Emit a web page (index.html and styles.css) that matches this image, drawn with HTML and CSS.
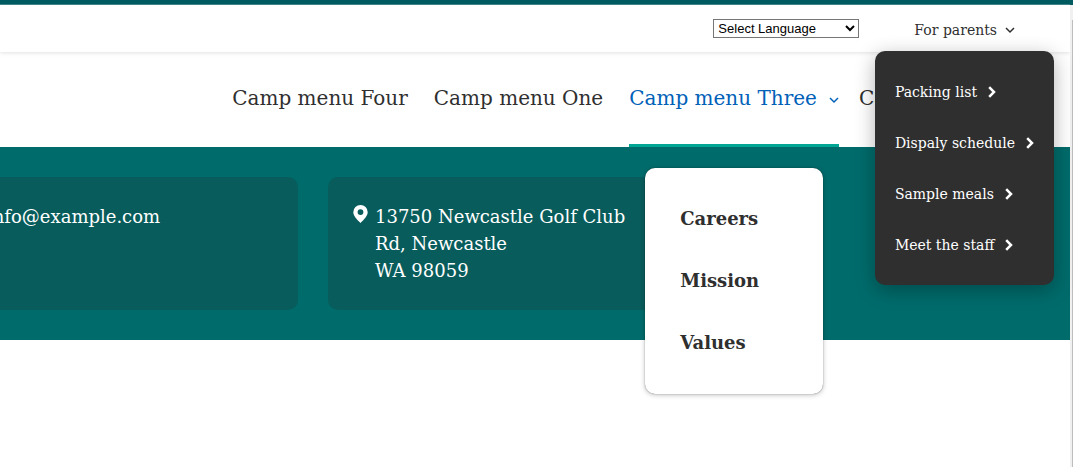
FILE: index.html
```html
<!DOCTYPE html>
<html lang="en">
<head>
<meta charset="utf-8">
<title>Camp</title>
<link rel="stylesheet" href="styles.css">
</head>
<body>
<div class="viewport">
  <div class="page">
    <header>
      <div class="topbar">
        <select class="language" aria-label="Select Language"><option>Select Language</option></select>
        <div class="parents">
          <a class="parents-link" href="#">For parents
            <svg class="chevron" viewBox="0 0 10 10" aria-hidden="true"><path d="M1 3l4 4 4-4"/></svg></a>
          <nav class="parents-menu" aria-label="For parents">
            <a href="#">Packing list <svg class="arrow" viewBox="0 0 8 12" aria-hidden="true"><path d="M1.200 1.200L6 6l-4.800 4.800"/></svg></a>
            <a href="#">Dispaly schedule <svg class="arrow" viewBox="0 0 8 12" aria-hidden="true"><path d="M1.200 1.200L6 6l-4.800 4.800"/></svg></a>
            <a href="#">Sample meals <svg class="arrow" viewBox="0 0 8 12" aria-hidden="true"><path d="M1.200 1.200L6 6l-4.800 4.800"/></svg></a>
            <a href="#">Meet the staff <svg class="arrow" viewBox="0 0 8 12" aria-hidden="true"><path d="M1.200 1.200L6 6l-4.800 4.800"/></svg></a>
          </nav>
        </div>
      </div>
      <nav class="mainnav" aria-label="Main">
        <a class="nav-link" href="#">Camp menu Four</a>
        <a class="nav-link" href="#">Camp menu One</a>
        <div class="nav-group">
          <a class="nav-link active" href="#">Camp menu Three
            <svg class="chevron" viewBox="0 0 10 10" aria-hidden="true"><path d="M1 3l4 4 4-4"/></svg></a>
          <div class="submenu">
            <a href="#">Careers</a>
            <a href="#">Mission</a>
            <a href="#">Values</a>
          </div>
        </div>
        <a class="nav-link" href="#">Camp menu Two</a>
      </nav>
    </header>
    <main class="contact">
      <div class="cards">
        <section class="card">
          <svg class="icon" viewBox="0 0 15 18" aria-hidden="true"><path d="M0 3h15v12H0z"/></svg>
          <a href="#">info@example.com</a>
        </section>
        <section class="card">
          <svg class="icon" viewBox="0 0 15 18" aria-hidden="true"><path fill-rule="evenodd" d="M7.500 0A7.200 7.200 0 0 0 .3 7.200C.3 10.500 3.500 14 7.500 18 11.500 14 14.700 10.500 14.700 7.200A7.200 7.200 0 0 0 7.500 0zM7.500 4.200a2.900 2.900 0 1 1 0 5.800 2.900 2.900 0 0 1 0-5.800z"/></svg>
          <address>13750 Newcastle Golf Club Rd, Newcastle<br>WA 98059</address>
        </section>
      </div>
    </main>
  </div>
  <div class="scrollbar"><div class="thumb"></div></div>
</div>
</body>
</html>
```
FILE: styles.css
```css
* { box-sizing: border-box; }
body {
  margin: 0;
  background: #fff;
  color: #2f2f2f;
  font-family: "DejaVu Serif", serif;
}
a { color: inherit; text-decoration: none; }
.viewport {
  display: flex;
  min-height: 100vh;
  overflow: hidden;
}
.page { flex: 1; min-width: 0; }
.scrollbar {
  display: flex;
  width: 3px;
  padding: 15px 0 0 2px;
  border-top: 5px solid #005b60;
  background: #f0f0f0;
}
.thumb { flex: 1; background: #bdbdbd; }

.topbar {
  display: flex;
  justify-content: flex-end;
  align-items: center;
  gap: 55px;
  height: 52px;
  padding-right: 55px;
  border-top: 4px solid #005b60;
  box-shadow: inset 0 1px #3f8488, 0 1px 4px rgba(0, 0, 0, 0.12);
}
.language {
  width: 146px;
  height: 19px;
  padding: 0;
  border: 1px solid #767676;
  border-radius: 0;
  background: #fff;
  color: #000;
  font: 13px "Liberation Sans", sans-serif;
}
.parents { position: relative; }
.parents-link {
  display: flex;
  align-items: center;
  gap: 8px;
  padding-top: 4px;
  font-size: 14px;
  line-height: 20px;
}
.chevron {
  width: 10px;
  height: 10px;
  fill: none;
  stroke: currentColor;
  stroke-width: 1.5;
}
.parents-menu {
  position: absolute;
  z-index: 3;
  top: 35px;
  right: -39px;
  padding: 15px 20px;
  border-radius: 10px;
  background: #2f2f2f;
  color: #fff;
  box-shadow: 0 5px 20px rgba(0, 0, 0, 0.3);
}
.parents-menu a {
  display: flex;
  align-items: center;
  gap: 11px;
  height: 51px;
  font-size: 14px;
  white-space: nowrap;
}
.arrow { width: 8px; height: 12px; fill: none; stroke: currentColor; stroke-width: 2.5; }

.mainnav {
  display: flex;
  justify-content: flex-end;
  gap: 26px;
  height: 95px;
  padding-right: 41px;
  font-size: 20px;
  white-space: nowrap;
}
.nav-link {
  display: flex;
  align-items: center;
  gap: 12px;
  height: 100%;
  padding-bottom: 4px;
}
.nav-group { position: relative; margin-right: -6px; }
.nav-group .chevron { margin-top: 4px; }
.active { color: #0061b8; box-shadow: inset 0 -3px #00a693; }
.submenu {
  position: absolute;
  z-index: 2;
  top: 116px;
  left: 16px;
  width: 178px;
  padding: 19px 35px 21px;
  border-radius: 10px;
  background: #fff;
  box-shadow: 0 0 1px rgba(0, 0, 0, 0.6), 0 1px 5px rgba(0, 0, 0, 0.25);
  font-size: 18px;
  font-weight: bold;
}
.submenu a { display: flex; align-items: center; height: 62px; }

.contact { padding: 30px 0; overflow: hidden; background: #006b6b; }
.cards {
  display: grid;
  grid-template-columns: 358px 351px;
  gap: 30px;
  margin-left: -60px;
}
.card {
  display: flex;
  gap: 7px;
  min-height: 133px;
  padding: 26px 25px;
  border-radius: 10px;
  background: #085c5b;
  color: #fff;
  font-size: 18px;
  line-height: 27px;
}
.card address { font-style: normal; }
.icon { flex: none; width: 15px; height: 18px; margin-top: 2px; fill: #fff; }
```
